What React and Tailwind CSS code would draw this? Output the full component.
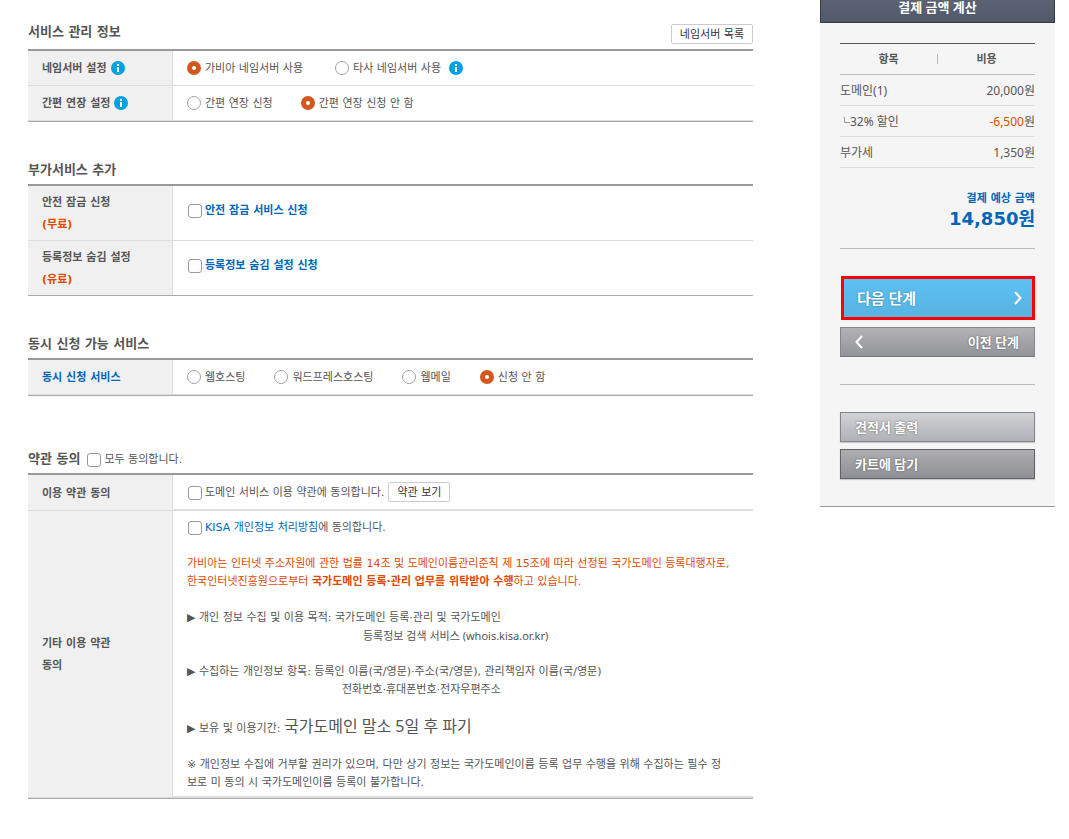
import React, { useState } from 'react';
import clsx from 'clsx';

const InfoButton = ({ label }) => (
  <button type="button" aria-label={label} className="shrink-0">
    <svg className="w-3.5 h-3.5 block" viewBox="0 0 14 14">
      <circle cx="7" cy="7" r="7" fill="#00a1e0" />
      <rect x="6" y="3" width="2" height="2" fill="#fff" />
      <path d="M6 6h2v5H6z" fill="#fff" />
    </svg>
  </button>
);

const Radio = ({ name, value, selected, onChange, children }) => (
  <label className="flex items-center gap-1">
    <input
      type="radio"
      name={name}
      value={value}
      checked={selected === value}
      onChange={() => onChange(value)}
      className="appearance-none w-3.5 h-3.5 shrink-0 rounded-full border border-[#a3a3a3] bg-white checked:border-5 checked:border-[#d3581f]"
    />
    <span className="pt-0.5">{children}</span>
  </label>
);

const Check = ({ checked, onChange, className, children }) => (
  <label className={clsx('flex items-center gap-[3px] pl-px', className)}>
    <input
      type="checkbox"
      checked={checked}
      onChange={onChange}
      className="appearance-none w-3.5 h-3.5 shrink-0 mt-0.5 rounded-[3px] border border-[#999] bg-white checked:bg-[#d3581f]"
    />
    <span className="pt-0.5">{children}</span>
  </label>
);

const SmallButton = ({ children }) => (
  <button type="button" className="h-5 px-2 pt-0.5 shrink-0 rounded-xs border border-[#ccc] bg-white text-[11px] leading-4 text-[#333]">
    {children}
  </button>
);

const Heading = ({ children }) => (
  <h2 className="text-[13px] leading-5 font-bold text-[#555]">{children}</h2>
);

const FormTable = ({ label, children }) => (
  <table aria-label={label} className="w-full border-separate border-spacing-0 border-t-2 border-b border-t-[#999] border-b-[#aaa]">
    <tbody>{children}</tbody>
  </table>
);

const Row = ({ title, info, last, tall, thick, children }) => (
  <tr className={clsx(tall && (last ? 'h-[54px]' : 'h-[55px]'), !tall && (thick ? 'h-9' : 'h-[35px]'))}>
    <th
      scope="row"
      className={clsx(
        'w-[145px] pl-3.5 pr-2 text-left font-bold leading-[22px] bg-[#f0f0f0] border-r border-[#ddd]',
        !last && 'border-b'
      )}
    >
      <div className="flex items-center gap-1">
        <div className="pt-0.5">{title}</div>
        {info && <InfoButton label={info} />}
      </div>
    </th>
    <td className={clsx('pl-3.5 border-[#ddd]', tall && 'pb-1.5', !last && (thick ? 'border-b-2' : 'border-b'))}>
      {children}
    </td>
  </tr>
);

const grayText = 'text-[13px] font-bold text-white [text-shadow:0_0_2px_#555]';

const Summary = () => (
  <aside className="w-[235px] shrink-0 self-start bg-[#f5f5f5] border-b border-[#999] font-['Noto_Sans','Noto_Sans_CJK_KR',sans-serif]">
    <h2 className="h-[23px] flex items-start justify-center border border-t-0 border-[#343946] bg-linear-to-b from-[#5b6373] to-[#50586a] text-[13px] leading-[15px] font-bold text-white">
      결제 금액 계산
    </h2>
    <div className="px-5 pt-5 pb-[27px]">
      <table className="w-full border-separate border-spacing-0 border-t border-[#555]">
        <thead>
          <tr className="h-[31px]">
            <th scope="col" className="border-b border-[#bbb]">
              <div className="border-r border-[#bbb] leading-[10px]">항목</div>
            </th>
            <th scope="col" className="border-b border-[#bbb] w-[97px]">비용</th>
          </tr>
        </thead>
        <tbody className="text-[12px]">
          <tr className="h-[31px]">
            <td className="pt-0.5 border-b border-[#ddd]">도메인(1)</td>
            <td className="pt-0.5 border-b border-[#ddd] text-right">20,000원</td>
          </tr>
          <tr className="h-[31px]">
            <td className="pt-0.5 border-b border-[#ddd]">
              <div className="flex items-center pl-1">
                <svg className="w-1.5 h-3" viewBox="0 0 6 12" fill="none" stroke="#999">
                  <path d="M.5 1v5.5H6" />
                </svg>
                32% 할인
              </div>
            </td>
            <td className="pt-0.5 border-b border-[#ddd] text-right">
              <span className="text-[#e04a00]">-6,500</span>원
            </td>
          </tr>
          <tr className="h-[31px]">
            <td className="pt-0.5 border-b border-[#ddd]">부가세</td>
            <td className="pt-0.5 border-b border-[#ddd] text-right">1,350원</td>
          </tr>
        </tbody>
      </table>
      <div className="pt-[23px] pb-[17px] border-b border-[#bbb] text-right font-bold text-[#0066b8] font-['DejaVu_Sans','Noto_Sans_CJK_KR',sans-serif]">
        <p className="leading-4">결제 예상 금액</p>
        <p className="text-[18px] leading-6">14,850원</p>
      </div>
      <div className="pt-[27px] pb-[27px] flex flex-col gap-[7px] border-b border-[#bbb]">
        <button type="button" className="ml-px h-11 pl-[13px] pr-2.5 flex items-center justify-between border-3 border-[#ff0000] bg-linear-to-b from-[#5cc1f3] to-[#58b3e0] text-[15px] font-bold text-white [text-shadow:0_0_2px_#2d7ba6]">
          다음 단계
          <svg className="w-2 h-3.5" viewBox="0 0 8 14" fill="none" stroke="#fff" strokeWidth="2">
            <path d="M1 1l5.5 6L1 13" />
          </svg>
        </button>
        <button type="button" className={clsx('h-[30px] pl-3.5 pr-[15px] flex items-center justify-between border border-[#85868c] border-b-[#75767c] bg-linear-to-b from-[#b3b3b6] to-[#939499]', grayText)}>
          <svg className="w-2 h-3.5" viewBox="0 0 8 14" fill="none" stroke="#fff" strokeWidth="2">
            <path d="M7 1L1.5 7 7 13" />
          </svg>
          이전 단계
        </button>
      </div>
      <div className="pt-[27px] flex flex-col gap-[7px]">
        <button type="button" className={clsx('h-[30px] pl-3.5 text-left border border-[#85858d] bg-linear-to-b from-[#d2d3d6] to-[#b0b1b7] shadow-[0_1px_1px_#ccc]', grayText)}>
          견적서 출력
        </button>
        <button type="button" className={clsx('h-[30px] pl-3.5 text-left border border-[#606066] bg-linear-to-b from-[#aeaeb0] to-[#8f9096] shadow-[0_1px_1px_#ccc]', grayText)}>
          카트에 담기
        </button>
      </div>
    </div>
  </aside>
);

const App = () => {
  const [nameserver, setNameserver] = useState('gabia');
  const [renewal, setRenewal] = useState('no');
  const [extra, setExtra] = useState('none');
  const [checks, setChecks] = useState({ lock: false, hide: false, domain: false, kisa: false });

  const toggle = (key) => setChecks({ ...checks, [key]: !checks[key] });
  const allAgreed = checks.domain && checks.kisa;
  const toggleAll = () => setChecks({ ...checks, domain: !allAgreed, kisa: !allAgreed });

  return (
    <div className="min-h-screen flex gap-[67px] pl-7 pr-3.5 bg-white text-[11px] leading-[18px] text-[#555] font-['DejaVu_Sans','Noto_Sans_CJK_KR',sans-serif]">
      <main className="flex-1 min-w-0 pb-10">
        <section>
          <div className="pt-[22px] pb-[5px] flex items-start justify-between">
            <Heading>서비스 관리 정보</Heading>
            <div className="pt-0.5 flex"><SmallButton>네임서버 목록</SmallButton></div>
          </div>
          <FormTable label="서비스 관리 정보">
            <Row title="네임서버 설정" info="네임서버 설정 안내">
              <div className="flex items-center gap-8">
                <Radio name="nameserver" value="gabia" selected={nameserver} onChange={setNameserver}>가비아 네임서버 사용</Radio>
                <div className="flex items-center gap-2">
                  <Radio name="nameserver" value="other" selected={nameserver} onChange={setNameserver}>타사 네임서버 사용</Radio>
                  <InfoButton label="타사 네임서버 안내" />
                </div>
              </div>
            </Row>
            <Row title="간편 연장 설정" info="간편 연장 안내">
              <div className="flex items-center gap-7">
                <Radio name="renewal" value="yes" selected={renewal} onChange={setRenewal}>간편 연장 신청</Radio>
                <Radio name="renewal" value="no" selected={renewal} onChange={setRenewal}>간편 연장 신청 안 함</Radio>
              </div>
            </Row>
          </FormTable>
        </section>

        <section className="pt-[38px]">
          <div className="pb-1"><Heading>부가서비스 추가</Heading></div>
          <FormTable label="부가서비스 추가">
            <Row tall title={<>안전 잠금 신청<br /><span className="text-[#e04a00]">(무료)</span></>}>
              <Check checked={checks.lock} onChange={() => toggle('lock')} className="font-bold text-[#0066b8]">안전 잠금 서비스 신청</Check>
            </Row>
            <Row tall last title={<>등록정보 숨김 설정<br /><span className="text-[#e04a00]">(유료)</span></>}>
              <Check checked={checks.hide} onChange={() => toggle('hide')} className="font-bold text-[#0066b8]">등록정보 숨김 설정 신청</Check>
            </Row>
          </FormTable>
        </section>

        <section className="pt-[38px]">
          <div className="pb-1"><Heading>동시 신청 가능 서비스</Heading></div>
          <FormTable label="동시 신청 가능 서비스">
            <Row title={<span className="text-[#0066b8]">동시 신청 서비스</span>}>
              <div className="flex items-center gap-[29px]">
                <Radio name="extra" value="web" selected={extra} onChange={setExtra}>웹호스팅</Radio>
                <Radio name="extra" value="wordpress" selected={extra} onChange={setExtra}>워드프레스호스팅</Radio>
                <Radio name="extra" value="mail" selected={extra} onChange={setExtra}>웹메일</Radio>
                <Radio name="extra" value="none" selected={extra} onChange={setExtra}>신청 안 함</Radio>
              </div>
            </Row>
          </FormTable>
        </section>

        <section className="pt-[53px]">
          <div className="pb-1 flex items-center gap-1.5">
            <Heading>약관 동의</Heading>
            <Check checked={allAgreed} onChange={toggleAll}>모두 동의합니다.</Check>
          </div>
          <FormTable label="약관 동의">
            <Row thick title="이용 약관 동의">
              <div className="flex items-center gap-1">
                <Check checked={checks.domain} onChange={() => toggle('domain')}>도메인 서비스 이용 약관에 동의합니다.</Check>
                <SmallButton>약관 보기</SmallButton>
              </div>
            </Row>
            <Row thick title={<>기타 이용 약관<br />동의</>}>
              <div className="pt-1.5 pb-1">
                <Check checked={checks.kisa} onChange={() => toggle('kisa')}>
                  <a href="#kisa" className="text-[#0066b8]">KISA 개인정보 처리방침</a>에 동의합니다.
                </Check>
                <p className="pt-[18px] text-[#e04a00]">
                  가비아는 인터넷 주소자원에 관한 법률 14조 및 도메인이름관리준칙 제 15조에 따라 선정된 국가도메인 등록대행자로,<br />
                  한국인터넷진흥원으로부터 <b>국가도메인 등록·관리 업무를 위탁받아 수행</b>하고 있습니다.
                </p>
                <p className="pt-[18px]">▶ 개인 정보 수집 및 이용 목적: 국가도메인 등록·관리 및 국가도메인</p>
                <p className="pl-44 font-['Noto_Sans','Noto_Sans_CJK_KR',sans-serif]">등록정보 검색 서비스 (whois.kisa.or.kr)</p>
                <p className="pt-[18px]">▶ 수집하는 개인정보 항목: 등록인 이름(국/영문)·주소(국/영문), 관리책임자 이름(국/영문)</p>
                <p className="pl-[155px]">전화번호·휴대폰번호·전자우편주소</p>
                <p className="pt-[18px]">
                  ▶ 보유 및 이용기간: <span className="text-[16px] font-['Noto_Sans','Noto_Sans_CJK_KR',sans-serif]">국가도메인 말소 5일 후 파기</span>
                </p>
                <p className="pt-[18px]">
                  ※ 개인정보 수집에 거부할 권리가 있으며, 다만 상기 정보는 국가도메인이름 등록 업무 수행을 위해 수집하는 필수 정<br />
                  보로 미 동의 시 국가도메인이름 등록이 불가합니다.
                </p>
              </div>
            </Row>
          </FormTable>
        </section>
      </main>
      <Summary />
    </div>
  );
};

export default App;
